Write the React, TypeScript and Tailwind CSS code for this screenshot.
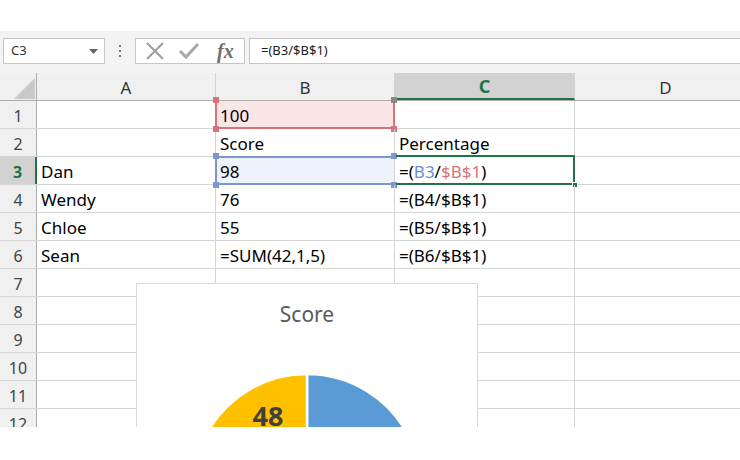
import React from 'react'

const FONT = { fontFamily: '"Noto Sans", "Open Sans", sans-serif' }

const rows: { a: string; b: string; c: React.ReactNode }[] = [
  { a: '', b: '100', c: '' },
  { a: '', b: 'Score', c: 'Percentage' },
  {
    a: 'Dan',
    b: '98',
    c: (
      <>
        =(<span className="text-[#6b8fcc]">B3</span>/<span className="text-[#d8737a]">$B$1</span>)
      </>
    ),
  },
  { a: 'Wendy', b: '76', c: '=(B4/$B$1)' },
  { a: 'Chloe', b: '55', c: '=(B5/$B$1)' },
  { a: 'Sean', b: '=SUM(42,1,5)', c: '=(B6/$B$1)' },
  { a: '', b: '', c: '' },
  { a: '', b: '', c: '' },
  { a: '', b: '', c: '' },
  { a: '', b: '', c: '' },
  { a: '', b: '', c: '' },
  { a: '', b: '', c: '' },
]

function Handle({ className }: { className: string }) {
  return <span className={`absolute w-[6px] h-[6px] ${className}`} />
}

function Pie() {
  // Excel-style pie, first slice at 12 o'clock going clockwise
  const data = [
    { v: 98, c: '#5b9bd5' },
    { v: 76, c: '#ed7d31' },
    { v: 55, c: '#a5a5a5' },
    { v: 48, c: '#ffc000' },
  ]
  const total = data.reduce((s, d) => s + d.v, 0)
  const cx = 170
  const cy = 204
  const r = 114
  let acc = 0
  return (
    <svg width="341" height="260" className="absolute left-0 top-0">
      {data.map((d, i) => {
        const a0 = (acc / total) * Math.PI * 2
        acc += d.v
        const a1 = (acc / total) * Math.PI * 2
        const x0 = cx + r * Math.sin(a0)
        const y0 = cy - r * Math.cos(a0)
        const x1 = cx + r * Math.sin(a1)
        const y1 = cy - r * Math.cos(a1)
        const large = a1 - a0 > Math.PI ? 1 : 0
        return (
          <path
            key={i}
            d={`M${cx},${cy} L${x0},${y0} A${r},${r} 0 ${large} 1 ${x1},${y1} Z`}
            fill={d.c}
            stroke="#fff"
            strokeWidth={2.5}
          />
        )
      })}
      <text x="131" y="142" fill="#404040" fontSize="27" fontWeight="700" textAnchor="middle" style={FONT}>
        48
      </text>
    </svg>
  )
}

export default function App() {
  return (
    <div className="w-[740px] h-[460px] bg-white overflow-hidden text-[#1f1f1f]" style={FONT}>
      <div className="h-[31px] bg-white" />

      {/* Name box + formula bar */}
      <div className="h-[42px] bg-[#f3f3f3] flex items-start pt-[7px]">
        <div className="ml-[3px] w-[102px] h-[26px] bg-white border border-[#c6c6c6] flex items-center justify-between pl-[7px] pr-[6px]">
          <span className="text-[13px] text-[#333]">C3</span>
          <svg width="9" height="5" viewBox="0 0 9 5">
            <path d="M0 0 L9 0 L4.5 5 Z" fill="#666" />
          </svg>
        </div>
        <div className="w-[30px] h-[26px] flex flex-col items-center justify-center gap-[3px]">
          <span className="w-[2px] h-[2px] bg-[#777]" />
          <span className="w-[2px] h-[2px] bg-[#777]" />
          <span className="w-[2px] h-[2px] bg-[#777]" />
        </div>
        <div className="w-[110px] h-[26px] bg-white border border-[#c6c6c6] flex items-center">
          <svg width="20" height="18" viewBox="0 0 20 18" className="ml-[9px]">
            <path d="M2 1 L18 17 M18 1 L2 17" stroke="#9d9d9d" strokeWidth="2" />
          </svg>
          <svg width="22" height="18" viewBox="0 0 22 18" className="ml-[13px]">
            <path d="M2 9 L8 15 L20 2" stroke="#a8a8a8" strokeWidth="3" fill="none" />
          </svg>
          <span
            className="ml-[17px] text-[20px] italic font-bold text-[#6e6e6e] leading-none"
            style={{ fontFamily: '"Liberation Serif", "DejaVu Serif", serif' }}
          >
            fx
          </span>
        </div>
        <div className="ml-[4px] flex-1 h-[26px] bg-white border border-[#c6c6c6] border-r-0 flex items-center pl-[11px]">
          <span className="text-[13px] text-[#222]">=(B3/$B$1)</span>
        </div>
      </div>

      {/* Sheet */}
      <div className="relative w-[740px] h-[354px] overflow-hidden bg-white">
        {/* column headers */}
        <div className="flex w-[756px] h-[28px] bg-[#f0f0f0] border-b border-[#ababab]">
          <div className="w-[37px] border-r border-[#ababab] relative">
            <svg width="21" height="21" className="absolute left-[14px] top-[5px]">
              <path d="M21 0 L21 21 L0 21 Z" fill="#c8c8c8" />
            </svg>
          </div>
          <div className="w-[179px] border-r border-[#d4d4d4] flex items-center justify-center pt-[2px] text-[17px] text-[#333]">A</div>
          <div className="w-[179px] border-r border-[#d4d4d4] flex items-center justify-center pt-[2px] text-[17px] text-[#333]">B</div>
          <div className="w-[180px] bg-[#d2d2d2] border-b-2 border-[#217346] border-r border-r-[#d4d4d4] flex items-center justify-center pt-[2px] text-[18px] font-bold text-[#217346]">
            C
          </div>
          <div className="flex-1 flex items-center justify-center pt-[2px] text-[17px] text-[#333]">D</div>
        </div>

        {rows.map((r, i) => {
          const n = i + 1
          const active = n === 3
          return (
            <div key={n} className="flex w-[756px] h-[28px] border-b border-[#d4d4d4]">
              <div
                className={`w-[37px] flex items-center justify-center pt-[2px] text-[16px] ${
                  active
                    ? 'bg-[#d2d2d2] text-[#217346] font-bold border-r-2 border-[#217346]'
                    : 'bg-[#f0f0f0] text-[#444] border-r border-[#ababab]'
                }`}
              >
                {n}
              </div>
              <div className="w-[179px] border-r border-[#d4d4d4] flex items-center pl-[4px] pt-[2px] text-[17px] text-black">
                {r.a}
              </div>
              <div
                className={`relative w-[179px] border-r border-[#d4d4d4] flex items-center pl-[4px] pt-[2px] text-[17px] text-black ${
                  n === 1 ? 'bg-[#fbe6e6]' : n === 3 ? 'bg-[#edf2fb]' : ''
                }`}
              >
                {r.b}
                {n === 1 && (
                  <>
                    <span className="absolute left-[-1px] top-[-1px] bottom-[-1px] w-[2px] bg-[#d9727a]" />
                    <span className="absolute right-[-1px] top-[-1px] bottom-[-1px] w-[2px] bg-[#d9727a]" />
                    <span className="absolute left-[-1px] right-[-1px] bottom-[-1px] h-[2px] bg-[#d9727a]" />
                    <Handle className="left-[-3px] bottom-[-4px] bg-[#d9727a]" />
                    <Handle className="right-[-3px] bottom-[-4px] bg-[#d9727a]" />
                    <Handle className="left-[-3px] top-[-4px] bg-[#d9727a]" />
                    <Handle className="right-[-3px] top-[-4px] bg-[#888]" />
                  </>
                )}
                {n === 3 && (
                  <>
                    <span className="absolute left-[-1px] top-[-1px] bottom-[-1px] w-[2px] bg-[#7b97d3]" />
                    <span className="absolute left-[-1px] right-0 top-[-1px] h-[2px] bg-[#7b97d3]" />
                    <span className="absolute left-[-1px] right-0 bottom-[-1px] h-[2px] bg-[#7b97d3]" />
                    <Handle className="left-[-3px] top-[-4px] bg-[#7b97d3]" />
                    <Handle className="left-[-3px] bottom-[-4px] bg-[#7b97d3]" />
                    <Handle className="right-[-3px] top-[-4px] bg-[#7b97d3]" />
                    <Handle className="right-[-3px] bottom-[-4px] bg-[#7b97d3]" />
                  </>
                )}
              </div>
              <div className="relative w-[180px] border-r border-[#d4d4d4] flex items-center pl-[4px] pt-[2px] text-[17px] text-black">
                {r.c}
                {active && (
                  <>
                    <span className="absolute left-[1px] right-[-1px] top-[-2px] bottom-[-1px] border-2 border-[#217346] border-l-0" />
                    <Handle className="right-[-4px] bottom-[-4px] bg-[#217346] border border-white" />
                  </>
                )}
              </div>
              <div className="flex-1" />
            </div>
          )
        })}

        {/* chart */}
        <div className="absolute left-[136px] top-[210px] w-[342px] h-[260px] bg-white border border-[#d9d9d9]">
          <div className="absolute left-0 right-0 top-[15px] text-center text-[21px] text-[#595959]">Score</div>
          <Pie />
        </div>
      </div>
    </div>
  )
}
